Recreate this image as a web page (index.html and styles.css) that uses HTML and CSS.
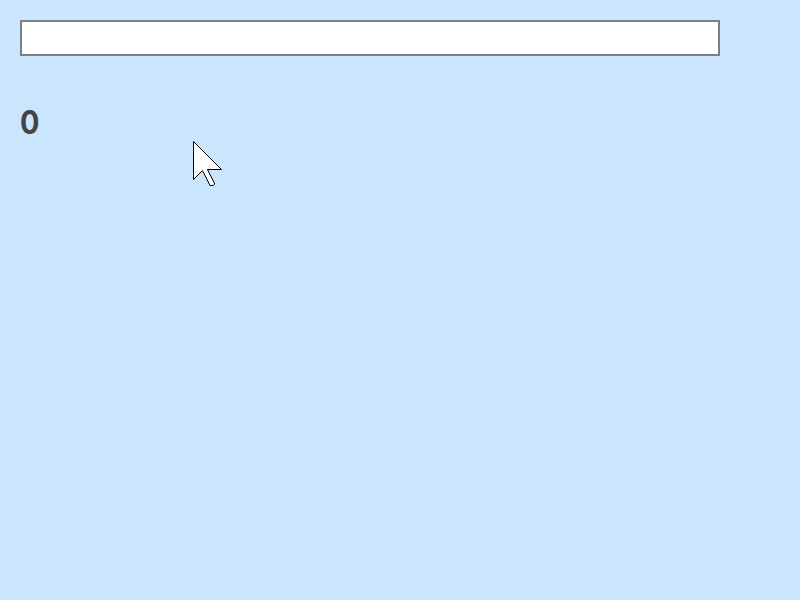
FILE: index.html
```html
<!DOCTYPE html>
<html lang="en">
<head>
<meta charset="utf-8">
<title>Counter</title>
<link rel="stylesheet" href="styles.css">
</head>
<body>
<input class="field" type="text" aria-label="Text">
<div class="count">0</div>
<svg class="cursor" width="32" height="48" viewBox="0 0 32 48"><path d="M1.5 1.5V39.5L10.5 30.5L18 45.5H21L22.8 44L15.5 29.5H29.5Z" fill="#fff" stroke="#000" stroke-width="1"/></svg>
</body>
</html>
```

FILE: styles.css
```css
body {
  margin: 0;
  padding: 20px;
  background: #cbe5ff;
  font-family: "Liberation Sans", Arial, sans-serif;
}

.field {
  display: block;
  box-sizing: border-box;
  width: 700px;
  height: 36px;
  margin: 0;
  padding: 2px 6px;
  border: 2px solid #7b7f86;
  background: #fff;
  font-size: 24px;
}

.count {
  margin-top: 48px;
  color: #444;
  font-family: Inter, sans-serif;
  font-size: 32px;
  font-weight: 700;
  line-height: 38px;
  transform: scaleX(0.9);
  transform-origin: left;
}

.cursor {
  position: absolute;
  left: 192px;
  top: 140px;
}
```
